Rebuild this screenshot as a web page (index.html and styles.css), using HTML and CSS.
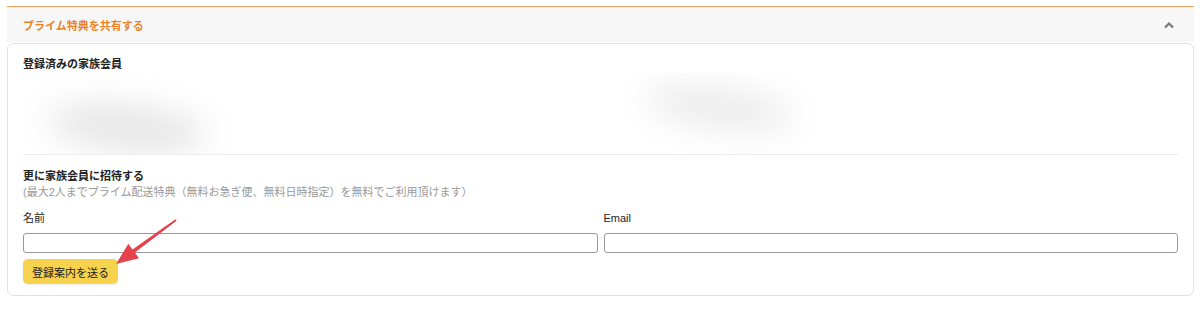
FILE: index.html
```html
<!DOCTYPE html>
<html lang="ja">
<head>
    <meta charset="UTF-8">
    <meta name="viewport" content="width=device-width, initial-scale=1.0">
    <title>プライム特典を共有する</title>
    <link rel="stylesheet" href="styles.css">
</head>
<body>
    <div class="panel">
        <div class="panel-head">
            <span class="panel-title">プライム特典を共有する</span>
            <svg class="chevron" width="12" height="8" viewBox="0 0 12 8">
                <path d="M2 6.5 L6 2.5 L10 6.5" fill="none" stroke="#777" stroke-width="2.2"/>
            </svg>
        </div>

        <div class="panel-body">
            <div class="section-title">登録済みの家族会員</div>
            <div class="members">
                <div class="member"><div class="member-blur left"></div></div>
                <div class="member"><div class="member-blur right"></div></div>
            </div>

            <div class="section-title invite">更に家族会員に招待する</div>
            <div class="note">(最大2人までプライム配送特典（無料お急ぎ便、無料日時指定）を無料でご利用頂けます）</div>

            <div class="fields">
                <label class="field">
                    <span class="field-label">名前</span>
                    <input type="text">
                </label>
                <label class="field">
                    <span class="field-label">Email</span>
                    <input type="text">
                </label>
            </div>
            <button class="send-btn">登録案内を送る</button>
        </div>
    </div>

    <!-- 注釈の矢印 -->
    <svg class="arrow" width="1200" height="309" viewBox="0 0 1200 309">
        <polygon fill="#e5434b" points="116,264 128.4,243.7 132.5,249.4 175.4,219.2 176.6,220.8 134.9,252.6 139,258.3"/>
    </svg>
</body>
</html>
```

FILE: styles.css
```css
body {
    margin: 0;
    background: #fff;
    font-family: "Liberation Sans", "Noto Sans CJK JP", sans-serif;
    font-size: 11px;
    color: #222;
}

.panel {
    margin: 6px 6px 0 7px;
}

.panel-head {
    height: 35px;
    border-top: 1px solid #f0a363;
    background: #f7f7f7;
    display: flex;
    align-items: center;
    justify-content: space-between;
    padding: 0 19px 0 16px;
}

.panel-title {
    color: #e8852c;
    font-weight: bold;
    font-size: 11px;
}

.chevron {
    display: block;
}

.panel-body {
    margin-top: 1px;
    border: 1px solid #e2e2e2;
    border-radius: 6px;
    padding: 13px 15px 11px;
}

.section-title {
    font-weight: bold;
    line-height: 14px;
}

.members {
    display: grid;
    grid-template-columns: 1fr 1fr;
    gap: 6px;
    height: 81px;
    margin-top: 2px;
    border-bottom: 1px solid #ececec;
    overflow: hidden;
}

.member {
    overflow: hidden;
}

.member-blur {
    background: #e6e6e6;
    border-radius: 50%;
    filter: blur(16px);
}

.member-blur.left {
    width: 160px;
    height: 46px;
    margin: 32px 0 0 24px;
    transform: rotate(6deg);
}

.member-blur.right {
    width: 150px;
    height: 42px;
    margin: 14px 0 0 40px;
    transform: rotate(8deg);
    background: #ececec;
}

.invite {
    margin-top: 14px;
}

.note {
    color: #999;
    line-height: 18px;
}

.fields {
    display: grid;
    grid-template-columns: 1fr 1fr;
    gap: 6px;
    margin-top: 10px;
}

.field {
    display: flex;
    flex-direction: column;
}

.field-label {
    line-height: 14px;
    color: #222;
}

.field input {
    margin-top: 8px;
    height: 20px;
    box-sizing: border-box;
    border: 1px solid #9a9a9a;
    border-radius: 3px;
    padding: 0 6px;
    font-size: 11px;
    background: #fff;
}

.send-btn {
    margin-top: 6px;
    height: 25px;
    padding: 0 9px;
    background: #f7d24c;
    border: none;
    border-radius: 5px;
    font-family: "Liberation Sans", "Noto Sans CJK JP", sans-serif;
    font-size: 11px;
    color: #222;
    box-shadow: 0 1px 2px rgba(0, 0, 0, 0.08);
}

.arrow {
    position: absolute;
    left: 0;
    top: 0;
    pointer-events: none;
}
```
